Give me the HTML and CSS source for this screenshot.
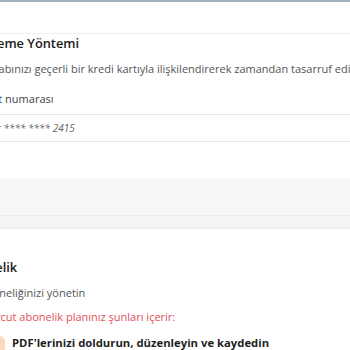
FILE: index.html
```html
<!DOCTYPE html>
<html lang="tr">
<head>
    <meta charset="UTF-8">
    <meta name="viewport" content="width=device-width, initial-scale=1.0">
    <title>Hesap Ayarları</title>
    <link rel="stylesheet" href="styles.css">
</head>
<body>
    <div class="topline"></div>
    <div class="prev-card"></div>

    <div class="page">
        <section class="card payment">
            <h2>Ödeme Yöntemi</h2>
            <p class="desc">Hesabınızı geçerli bir kredi kartıyla ilişkilendirerek zamandan tasarruf edin</p>
            <label class="field-label" for="card-number">Kart numarası</label>
            <div class="field" id="card-number">**** **** **** 2415</div>
        </section>
    </div>

    <div class="gap"></div>

    <div class="page">
        <section class="card subscription">
            <div class="card-strip"></div>
            <h2>Üyelik</h2>
            <p class="desc">Aboneliğinizi yönetin</p>
            <p class="plan-note">Mevcut abonelik planınız şunları içerir:</p>
            <ul class="features">
                <li>
                    <span class="feature-icon"></span>
                    PDF'lerinizi doldurun, düzenleyin ve kaydedin
                </li>
            </ul>
        </section>
    </div>
</body>
</html>
```

FILE: styles.css
```css
body {
    margin: 0;
    overflow: hidden;
    background: #fff;
    font-family: "Open Sans", "Liberation Sans", sans-serif;
    color: #1c1c1c;
}
.topline {
    height: 2px;
    background: #a5b2c2;
}
.prev-card {
    height: 31px;
    border-bottom: 1px solid #efefef;
}
.page {
    margin-left: -21px;
    width: 420px;
}
.card {
    background: #fff;
}
.payment {
    padding-bottom: 36px;
}
h2 {
    margin: 0;
    font-size: 12.8px;
    line-height: 18px;
    font-weight: 600;
    color: #1a1a1a;
}
.desc {
    margin: 9px 0 0;
    font-size: 11px;
    line-height: 16px;
    color: #555;
    white-space: nowrap;
}
.field-label {
    display: block;
    margin-top: 14px;
    margin-left: 2px;
    font-size: 11px;
    line-height: 16px;
    color: #444;
}
.field {
    margin-top: 7px;
    height: 26px;
    border-top: 1px solid #e6e6e6;
    border-bottom: 1px solid #e6e6e6;
    line-height: 26px;
    font-size: 10px;
    font-style: italic;
    color: #666;
}
.gap {
    height: 37px;
    background: #f7f7f7;
}
.card-strip {
    height: 12px;
    background: #f4f4f4;
    border-top: 1px solid #ececec;
    border-bottom: 1px solid #ededed;
    margin-bottom: 29px;
}
.plan-note {
    margin: 8px 0 0;
    font-size: 11px;
    line-height: 16px;
    color: #e2505a;
}
.features {
    list-style: none;
    margin: 9px 0 0;
    padding: 0;
}
.features li {
    display: flex;
    align-items: flex-start;
    gap: 7px;
    font-size: 11.3px;
    line-height: 18px;
    font-weight: 700;
    color: #1f1f1f;
}
.feature-icon {
    width: 24px;
    height: 24px;
    margin-top: 2px;
    margin-left: 2px;
    border-radius: 6px;
    background: #fcd8bd;
}
```
